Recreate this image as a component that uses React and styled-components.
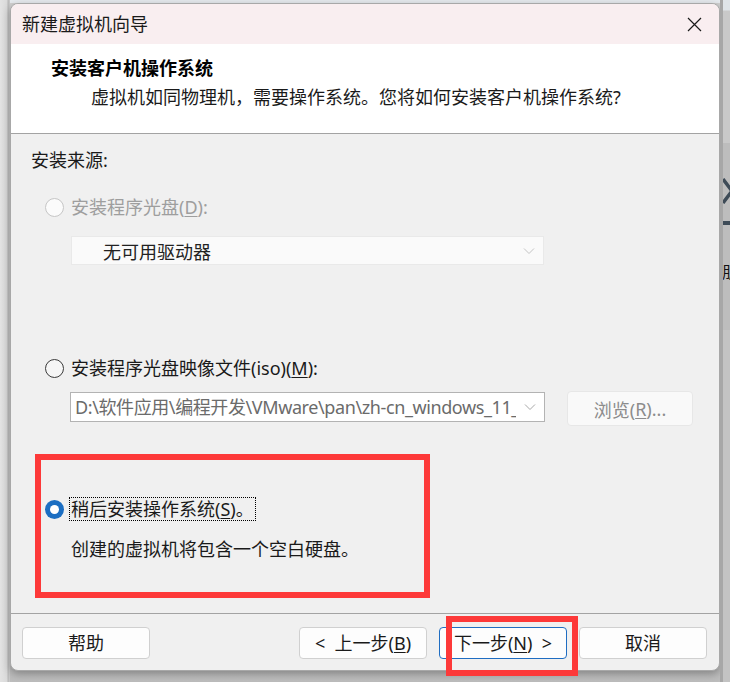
import React from 'react';
import styled, { createGlobalStyle, css } from 'styled-components';

const GlobalStyle = createGlobalStyle`
  html, body { margin: 0; padding: 0; }
  *, *::before, *::after { box-sizing: border-box; }
  body {
    width: 730px;
    height: 682px;
    overflow: hidden;
    font-family: "Noto Sans", "Noto Sans CJK SC", sans-serif;
  }
`;

const Desktop = styled.div`
  display: flex;
  width: 730px;
  height: 682px;
  background: #c2c2c2;
`;

const LeftEdge = styled.div`
  width: 10px;
  background: linear-gradient(to right, #e3e3e3 0, #dadada 7px, #b8b8b8 8px, #cdcdcd 10px);
`;

const Center = styled.div`
  width: 710px;
  padding-top: 3px;
  background: linear-gradient(to bottom, #e6eaee 0, #e6eaee 3px, #d0d0d0 3px, #bdbdbd 100%);
`;

const RightEdge = styled.div`
  width: 10px;
  display: flex;
  flex-direction: column;
  border-left: 3px solid #a7a7a7;
  background: #c3c3c3;
  overflow: hidden;
`;

const EdgeTop = styled.div`
  height: 143px;
  background: linear-gradient(to bottom, #dfe4e8 0, #dfe4e8 10px, #c9c9c9 11px);
`;

const EdgePanel = styled.div`
  height: 187px;
  background: #bdbdbd;
  display: flex;
  flex-direction: column;
  padding-top: 34px;
`;

const EdgeBar = styled.div`
  height: 4px;
  margin-top: 14px;
  background: #3e4b57;
`;

const EdgeGlyph = styled.span`
  margin-top: 38px;
  font-size: 16px;
  line-height: 18px;
  color: #111;
  white-space: nowrap;
  margin-left: -1px;
`;

const Window = styled.div`
  height: 668px;
  display: flex;
  flex-direction: column;
  background: #f0f0f0;
  border: 1px solid #a8a8a8;
  border-radius: 8px;
  box-shadow: 0 3px 8px rgba(0, 0, 0, 0.3);
  color: #1a1a1a;
  font-size: 18px;
`;

const TitleBar = styled.div`
  flex: 0 0 40px;
  display: flex;
  align-items: center;
  justify-content: space-between;
  padding: 0 17px 0 11px;
  background: #f9eef0;
  border-radius: 7px 7px 0 0;
  line-height: 24px;
`;

const Header = styled.div`
  flex: 0 0 90px;
  background: #ffffff;
  border-bottom: 1px solid #a3a3a3;
  padding: 12px 0 0 40px;
`;

const Heading = styled.div`
  font-weight: 700;
  line-height: 24px;
  color: #000;
`;

const Subtitle = styled.div`
  margin: 5px 0 0 40px;
  line-height: 24px;
`;

const Body = styled.div`
  flex: 1;
  display: flex;
  flex-direction: column;
  align-items: flex-start;
  padding: 14px 0 0 20px;
`;

const Text = styled.div`
  line-height: 24px;
  margin-top: ${p => p.$top || 0}px;
  margin-left: ${p => p.$left || 0}px;
  color: ${p => (p.$muted ? '#9e9e9e' : '#1a1a1a')};
`;

const RadioRow = styled.div`
  display: flex;
  align-items: center;
  height: 24px;
  margin-top: ${p => p.$top || 0}px;
  padding-left: ${p => p.$indent}px;
`;

const Radio = styled.span`
  position: relative;
  width: 19px;
  height: 19px;
  border-radius: 50%;
  flex: none;
  ${p => p.$state === 'disabled' && css`
    border: 1px solid #c6c6c6;
    background: #fbfbfb;
  `}
  ${p => p.$state === 'off' && css`
    border: 1px solid #3a3a3a;
    background: #f6f6f6;
  `}
  ${p => p.$state === 'on' && css`
    background: #1b6ec2;
    &::after {
      content: '';
      position: absolute;
      left: 5px;
      top: 5px;
      width: 9px;
      height: 9px;
      border-radius: 50%;
      background: #fff;
    }
  `}
`;

const RadioLabel = styled.span`
  line-height: 22px;
  color: ${p => (p.$muted ? '#9e9e9e' : '#1a1a1a')};
  ${p => (p.$focused
    ? css`
        margin-left: 5px;
        padding: 0 1px;
        border: 1px dotted #000;
      `
    : css`
        margin-left: 7px;
      `)}
`;

const Key = styled.span`
  text-decoration: underline;
  text-underline-offset: 2px;
`;

const Select = styled.div`
  display: flex;
  align-items: center;
  justify-content: space-between;
  width: 473px;
  height: 29px;
  margin: 17px 0 0 40px;
  padding: 0 8px 0 31px;
  background: #fafafa;
  border: 1px solid #e9e9e9;
  color: #222;
`;

const PathRow = styled.div`
  display: flex;
  align-items: flex-start;
  margin: 11px 0 0 39px;
`;

const PathInput = styled.div`
  display: flex;
  align-items: center;
  width: 475px;
  height: 30px;
  margin-top: 1px;
  padding: 0 8px 0 4px;
  background: #fff;
  border: 1px solid #b3b3b3;
`;

const PathText = styled.span`
  width: 441px;
  overflow: hidden;
  white-space: nowrap;
  color: #6b6b6b;
  line-height: 24px;
  letter-spacing: -0.4px;
  margin-right: 8px;
`;

const BrowseButton = styled.div`
  width: 126px;
  height: 35px;
  margin-left: 22px;
  display: flex;
  align-items: center;
  justify-content: center;
  background: #f9f9f9;
  border: 1px solid #e7e7e7;
  border-radius: 4px;
  color: #8c8c8c;
`;

const Highlight = styled.div`
  width: 395px;
  height: 144px;
  margin: 28px 0 0 4px;
  padding-top: 37px;
  border: 6px solid #fd3939;
`;

const Footer = styled.div`
  flex: 0 0 57px;
  display: flex;
  align-items: flex-start;
  justify-content: space-between;
  padding: 13px 12px 0 11px;
  border-top: 1px solid #a3a3a3;
`;

const ButtonGroup = styled.div`
  display: flex;
  gap: 12px;
`;

const Button = styled.div`
  position: relative;
  width: 128px;
  height: 32px;
  display: flex;
  align-items: center;
  justify-content: center;
  background: #fdfdfd;
  border: 1px solid ${p => (p.$primary ? '#1f6dc2' : '#d0d0d0')};
  border-radius: 4px;
  line-height: 24px;
  white-space: pre;
`;

const Annotation = styled.span`
  position: absolute;
  left: 6px;
  top: -12px;
  width: 132px;
  height: 60px;
  border: 6px solid #fd3939;
  pointer-events: none;
`;

const Chevron = ({ color = '#a8a8a8' }) => (
  <svg width="12" height="8" viewBox="0 0 12 8">
    <polyline points="1,1.5 6,6.5 11,1.5" fill="none" stroke={color} strokeWidth="1" />
  </svg>
);

const CloseIcon = () => (
  <svg width="15" height="15" viewBox="0 0 15 15">
    <path d="M1 1 L14 14 M14 1 L1 14" stroke="#1a1a1a" strokeWidth="1.2" />
  </svg>
);

const App = () => (
  <>
    <GlobalStyle />
    <Desktop>
      <LeftEdge />
      <Center>
        <Window>
          <TitleBar>
            <span>新建虚拟机向导</span>
            <CloseIcon />
          </TitleBar>

          <Header>
            <Heading>安装客户机操作系统</Heading>
            <Subtitle>虚拟机如同物理机，需要操作系统。您将如何安装客户机操作系统?</Subtitle>
          </Header>

          <Body>
            <Text>安装来源:</Text>

            <RadioRow $top={23} $indent={14}>
              <Radio $state="disabled" />
              <RadioLabel $muted>安装程序光盘(<Key>D</Key>):</RadioLabel>
            </RadioRow>
            <Select>
              <span>无可用驱动器</span>
              <Chevron color="#c4c4c4" />
            </Select>

            <RadioRow $top={91} $indent={14}>
              <Radio $state="off" />
              <RadioLabel>安装程序光盘映像文件(iso)(<Key>M</Key>):</RadioLabel>
            </RadioRow>
            <PathRow>
              <PathInput>
                <PathText>D:\软件应用\编程开发\VMware\pan\zh-cn_windows_11_</PathText>
                <Chevron />
              </PathInput>
              <BrowseButton>浏览(<Key>R</Key>)...</BrowseButton>
            </PathRow>

            <Highlight>
              <RadioRow $indent={4}>
                <Radio $state="on" />
                <RadioLabel $focused>稍后安装操作系统(<Key>S</Key>)。</RadioLabel>
              </RadioRow>
              <Text $top={16} $left={30}>创建的虚拟机将包含一个空白硬盘。</Text>
            </Highlight>
          </Body>

          <Footer>
            <Button>帮助</Button>
            <ButtonGroup>
              <Button>{'<  上一步('}<Key>B</Key>)</Button>
              <Button $primary>
                下一步(<Key>N</Key>){'  >'}
                <Annotation />
              </Button>
              <Button>取消</Button>
            </ButtonGroup>
          </Footer>
        </Window>
      </Center>
      <RightEdge>
        <EdgeTop />
        <EdgePanel>
          <svg width="10" height="30" viewBox="0 0 10 30">
            <polyline points="0,2 9,14 0,26" fill="none" stroke="#3e4b57" strokeWidth="3.5" />
          </svg>
          <EdgeBar />
          <EdgeGlyph>朋</EdgeGlyph>
        </EdgePanel>
      </RightEdge>
    </Desktop>
  </>
);

export default App;
